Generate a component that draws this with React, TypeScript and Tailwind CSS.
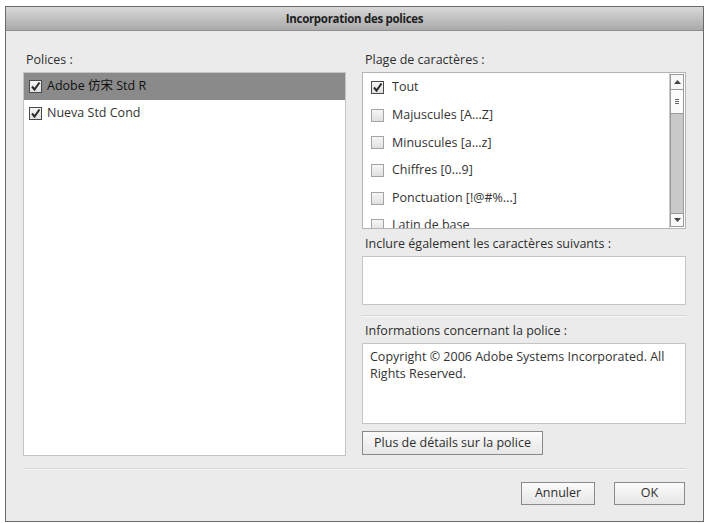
const font = { fontFamily: '"Open Sans", "Noto Sans CJK SC", sans-serif' };

const CheckBox = ({ checked }: { checked: boolean }) => (
  <span
    className={`flex h-[13px] w-[13px] shrink-0 items-center justify-center border bg-gradient-to-b from-[#f6f6f6] to-[#e0e0e0] ${
      checked ? "border-[#4a4a4a]" : "border-[#a4a4a4]"
    }`}
  >
    {checked && (
      <svg width="11" height="11" viewBox="0 0 11 11">
        <path d="M2 5.5 L4.5 8.5 L9.5 1.5" fill="none" stroke="#2a2a2a" strokeWidth="2" />
      </svg>
    )}
  </span>
);

const ranges = [
  { label: "Tout", checked: true },
  { label: "Majuscules [A...Z]", checked: false },
  { label: "Minuscules [a...z]", checked: false },
  { label: "Chiffres [0...9]", checked: false },
  { label: "Ponctuation [!@#%...]", checked: false },
  { label: "Latin de base", checked: false },
];

const Label = ({ children }: { children: React.ReactNode }) => (
  <div className="h-4 pl-[3px] text-[12.5px] leading-4 text-[#2e2e2e]">{children}</div>
);

const Button = ({ children, className }: { children: React.ReactNode; className: string }) => (
  <button
    className={`flex items-center justify-center border border-[#8a8a8a] bg-gradient-to-b from-[#fbfbfb] to-[#e6e6e6] text-[12.5px] text-[#2e2e2e] ${className}`}
  >
    {children}
  </button>
);

const Scrollbar = () => (
  <div className="flex w-[16px] flex-col border-l border-[#c8c8c8] bg-white py-[1px] pr-[1px]">
    <div className="flex h-[16px] items-center justify-center border border-[#9a9a9a] bg-[#f8f8f8]">
      <svg width="7" height="4" viewBox="0 0 7 4">
        <path d="M0 4 L3.5 0 L7 4 Z" fill="#444" />
      </svg>
    </div>
    <div className="flex h-[24px] items-center justify-center border border-t-0 border-[#9a9a9a] bg-[#fbfbfb]">
      <svg width="4" height="6" viewBox="0 0 4 6">
        <path d="M0 0.5 H4 M0 2.5 H4 M0 4.5 H4" stroke="#666" strokeWidth="1" />
      </svg>
    </div>
    <div className="flex-1 border-x border-[#9a9a9a] bg-[#c9c9c9]" />
    <div className="flex h-[14px] items-center justify-center border border-[#9a9a9a] bg-[#f8f8f8]">
      <svg width="7" height="4" viewBox="0 0 7 4">
        <path d="M0 0 L3.5 4 L7 0 Z" fill="#444" />
      </svg>
    </div>
  </div>
);

const App = () => {
  return (
    <div className="h-[523px] w-[706px] bg-white pl-[5px] pt-[6px]" style={font}>
      <div className="flex h-[516px] w-[699px] flex-col border border-[#6a6a6a] bg-[#ebebeb]">
        {/* Title bar */}
        <div className="flex h-[24px] shrink-0 items-center justify-center border-b border-[#8c8c8c] bg-gradient-to-b from-[#d9d9d9] to-[#a9a9a9] text-[11.5px] font-bold tracking-[-0.3px] text-[#1e1e1e]">
          Incorporation des polices
        </div>

        <div className="flex flex-1 flex-col px-[17px] pt-[21px]">
          <div className="flex gap-[16px]">
            {/* Fonts */}
            <div className="flex w-[323px] flex-col gap-[4px]">
              <Label>Polices :</Label>
              <div className="h-[384px] border border-[#c4c4c4] bg-white">
                <div className="flex h-[27px] items-center gap-[5px] bg-[#8a8a8a] pl-[5px] text-[12.5px] text-[#111]">
                  <CheckBox checked />
                  <span>Adobe 仿宋 Std R</span>
                </div>
                <div className="flex h-[27px] items-center gap-[5px] pl-[5px] text-[12.5px] text-[#333]">
                  <CheckBox checked />
                  <span>Nueva Std Cond</span>
                </div>
              </div>
            </div>

            {/* Right side */}
            <div className="flex w-[324px] flex-col">
              <Label>Plage de caractères :</Label>
              <div className="mt-[4px] flex h-[157px] border border-[#b4b4b4] bg-white">
                <div className="flex-1 overflow-hidden pt-[1px]">
                  {ranges.map((r) => (
                    <div key={r.label} className="flex h-[27.6px] items-center gap-[8px] pl-[8px] text-[12.5px] text-[#333]">
                      <CheckBox checked={r.checked} />
                      <span>{r.label}</span>
                    </div>
                  ))}
                </div>
                <Scrollbar />
              </div>

              <div className="mt-[7px]">
                <Label>Inclure également les caractères suivants :</Label>
              </div>
              <div className="mt-[4px] h-[49px] border border-[#c4c4c4] bg-white" />

              <div className="mt-[10px] h-[2px] border-t border-[#d6d6d6] bg-[#f6f6f6]" />

              <div className="mt-[6px]">
                <Label>Informations concernant la police :</Label>
              </div>
              <div className="mt-[4px] h-[81px] border border-[#c4c4c4] bg-white px-[7px] py-[4px] text-[12.5px] leading-[17px] text-[#333]">
                Copyright © 2006 Adobe Systems Incorporated. All Rights Reserved.
              </div>

              <Button className="mt-[7px] h-[24px] w-[181px]">Plus de détails sur la police</Button>
            </div>
          </div>

          <div className="mt-[12px] h-[2px] border-t border-[#d6d6d6] bg-[#f6f6f6]" />

          <div className="mt-[12px] flex justify-end gap-[19px] pr-[1px]">
            <Button className="h-[23px] w-[74px]">Annuler</Button>
            <Button className="h-[23px] w-[71px]">OK</Button>
          </div>
        </div>
      </div>
    </div>
  );
};

export default App;
